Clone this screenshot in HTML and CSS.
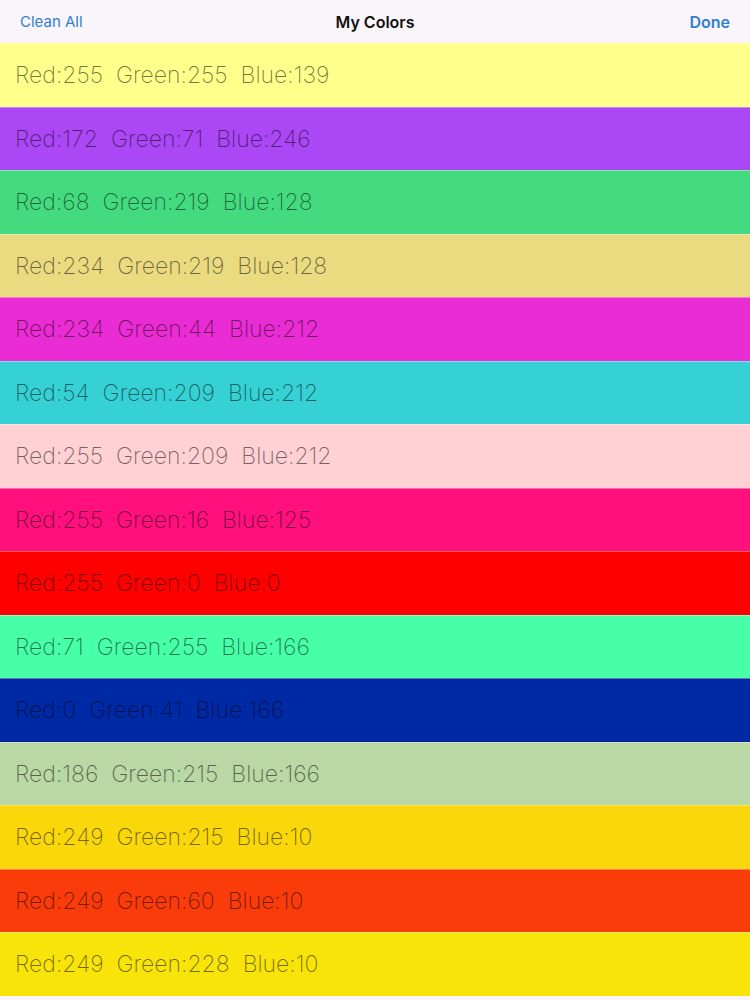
FILE: index.html
```html
<!DOCTYPE html>
<html>
<head>
<meta charset="utf-8">
<link rel="stylesheet" href="styles.css">
</head>
<body>
<div class="nav">
  <span class="nav-btn left">Clean All</span>
  <span class="nav-title">My Colors</span>
  <span class="nav-btn done">Done</span>
</div>
<div class="list">
  <div class="row" style="background: rgb(255,255,139)">Red:255&nbsp; Green:255&nbsp; Blue:139</div>
  <div class="row" style="background: rgb(172,71,246)">Red:172&nbsp; Green:71&nbsp; Blue:246</div>
  <div class="row" style="background: rgb(68,219,128)">Red:68&nbsp; Green:219&nbsp; Blue:128</div>
  <div class="row" style="background: rgb(234,219,128)">Red:234&nbsp; Green:219&nbsp; Blue:128</div>
  <div class="row" style="background: rgb(234,44,212)">Red:234&nbsp; Green:44&nbsp; Blue:212</div>
  <div class="row" style="background: rgb(54,209,212)">Red:54&nbsp; Green:209&nbsp; Blue:212</div>
  <div class="row" style="background: rgb(255,209,212)">Red:255&nbsp; Green:209&nbsp; Blue:212</div>
  <div class="row" style="background: rgb(255,16,125)">Red:255&nbsp; Green:16&nbsp; Blue:125</div>
  <div class="row" style="background: rgb(255,0,0)">Red:255&nbsp; Green:0&nbsp; Blue:0</div>
  <div class="row" style="background: rgb(71,255,166)">Red:71&nbsp; Green:255&nbsp; Blue:166</div>
  <div class="row" style="background: rgb(0,41,166)">Red:0&nbsp; Green:41&nbsp; Blue:166</div>
  <div class="row" style="background: rgb(186,215,166)">Red:186&nbsp; Green:215&nbsp; Blue:166</div>
  <div class="row" style="background: rgb(249,215,10)">Red:249&nbsp; Green:215&nbsp; Blue:10</div>
  <div class="row" style="background: rgb(249,60,10)">Red:249&nbsp; Green:60&nbsp; Blue:10</div>
  <div class="row" style="background: rgb(249,228,10)">Red:249&nbsp; Green:228&nbsp; Blue:10</div>
</div>
</body>
</html>
```
FILE: styles.css
```css
html, body {
  margin: 0;
  padding: 0;
  background: #f9f5fa;
  width: 750px;
  height: 1000px;
  overflow: hidden;
}
.nav {
  height: 43px;
  display: grid;
  grid-template-columns: 1fr auto 1fr;
  align-items: center;
  padding: 0 20px;
  background: #f9f5fa;
  font-family: Inter, "Liberation Sans", Arial, sans-serif;
  font-size: 16px;
}
.nav-btn {
  color: #2f80d1;
}
.left {
  font-size: 15px;
  justify-self: start;
}
.done {
  font-weight: 600;
  justify-self: end;
}
.nav-title {
  color: #111;
  font-weight: 600;
}
.list {
  display: flex;
  flex-direction: column;
}
.row {
  height: 63.5px;
  box-sizing: border-box;
  border-top: 1px solid rgba(255,255,255,0.35);
  display: flex;
  align-items: center;
  padding-left: 15px;
  font-family: Inter, "Liberation Sans", sans-serif;
  font-weight: 200;
  font-size: 23px;
  color: rgba(0,0,0,0.55);
  white-space: pre;
}
.row:first-child {
  border-top: none;
}
```
